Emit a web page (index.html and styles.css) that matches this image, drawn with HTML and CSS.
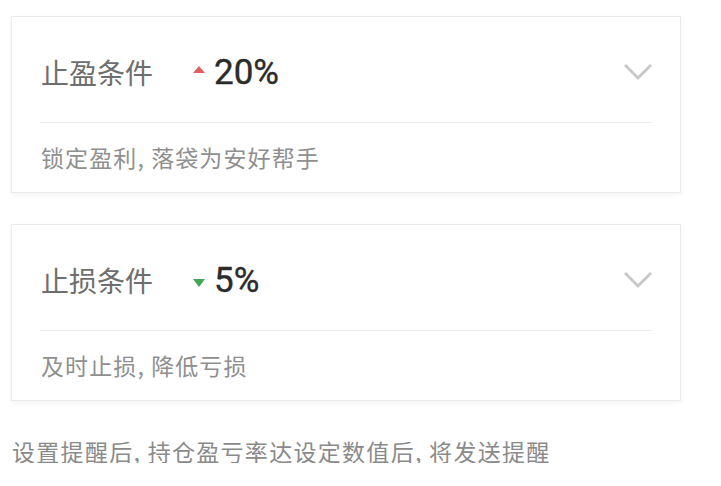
FILE: index.html
```html
<!DOCTYPE html>
<html lang="zh-CN">
<head>
    <meta charset="UTF-8">
    <meta name="viewport" content="width=device-width, initial-scale=1.0">
    <title>止盈止损提醒</title>
    <link rel="stylesheet" href="styles.css">
</head>
<body>
    <main class="page">
        <section class="card">
            <div class="card-head">
                <span class="card-title">止盈条件</span>
                <span class="arrow arrow-up"></span>
                <span class="card-value">20%</span>
                <svg class="chevron" width="30" height="20" viewBox="0 0 30 20">
                    <polyline points="2,3 15,16 28,3" fill="none" stroke="#c9c9c9" stroke-width="3"/>
                </svg>
            </div>
            <div class="card-desc">锁定盈利, 落袋为安好帮手</div>
        </section>

        <section class="card">
            <div class="card-head">
                <span class="card-title">止损条件</span>
                <span class="arrow arrow-down"></span>
                <span class="card-value">5%</span>
                <svg class="chevron" width="30" height="20" viewBox="0 0 30 20">
                    <polyline points="2,3 15,16 28,3" fill="none" stroke="#c9c9c9" stroke-width="3"/>
                </svg>
            </div>
            <div class="card-desc">及时止损, 降低亏损</div>
        </section>

        <p class="note">设置提醒后, 持仓盈亏率达设定数值后, 将发送提醒</p>
    </main>
</body>
</html>
```

FILE: styles.css
```css
body {
    margin: 0;
    padding: 0;
    background: #fff;
    font-family: "Noto Sans CJK SC", "Noto Sans", sans-serif;
}
.page {
    padding: 16px 40px 0 11px;
    display: flex;
    flex-direction: column;
    gap: 31px;
}
.card {
    border: 1px solid #ebebeb;
    box-shadow: 0 2px 6px rgba(0, 0, 0, 0.05);
    padding: 0 28px;
}
.card-head {
    height: 100px;
    padding-top: 5px;
    display: flex;
    align-items: center;
    border-bottom: 1px solid #ececec;
}
.card-title {
    font-size: 28px;
    color: #6e6e6e;
    line-height: 1;
    margin-left: 1px;
}
.arrow {
    width: 0;
    height: 0;
    border-left: 6px solid transparent;
    border-right: 6px solid transparent;
    margin: 0 9px 0 40px;
}
.arrow-up {
    border-bottom: 7px solid #e0605e;
    margin-bottom: 6px;
}
.arrow-down {
    border-top: 8px solid #45a556;
    margin-top: 6px;
}
.card-value {
    font-family: Roboto, "Liberation Sans", sans-serif;
    font-weight: 400;
    font-size: 35px;
    color: #2b2b2b;
    line-height: 1;
    -webkit-text-stroke: 0.4px #2b2b2b;
}
.chevron {
    margin-left: auto;
    margin-right: -1px;
}
.card-desc {
    height: 69px;
    display: flex;
    align-items: center;
    font-size: 23px;
    line-height: 1;
    letter-spacing: 1.1px;
    color: #8f8f8f;
    margin-left: 1px;
}
.note {
    margin: 8px 0 0 1px;
    font-size: 23px;
    line-height: 1;
    letter-spacing: 1.3px;
    color: #8a8a8a;
}
```
